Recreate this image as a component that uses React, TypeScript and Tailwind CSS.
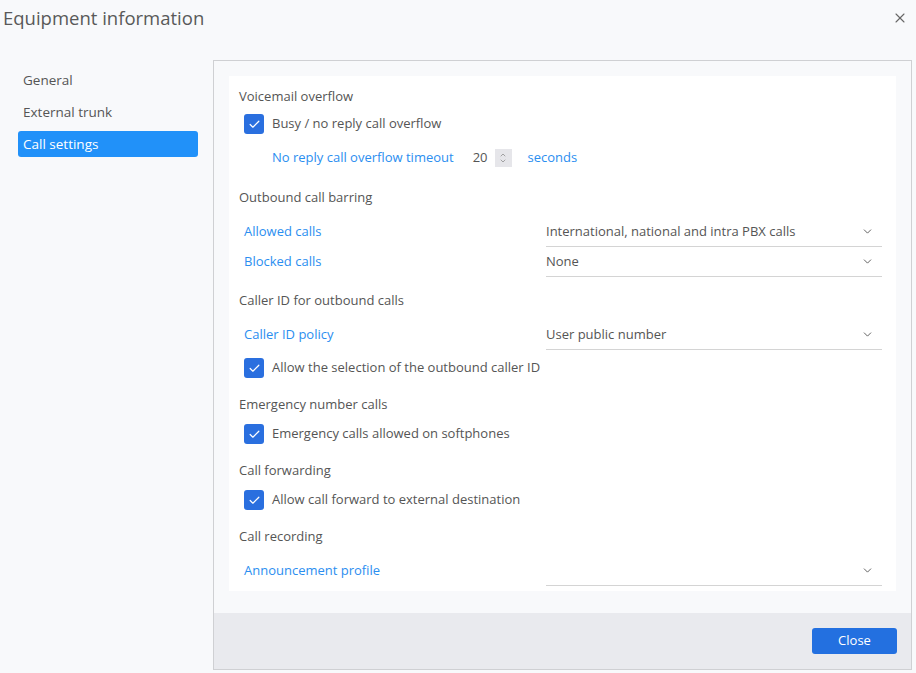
import { Check, ChevronDown, ChevronUp, X } from 'lucide-react'

function CheckRow({ label }: { label: string }) {
    return (
        <div className="flex h-[20px] items-center gap-[8px] pl-[15px]">
            <span className="flex h-[20px] w-[20px] items-center justify-center rounded-[3px] bg-[#2a6fdf]">
                <Check className="h-[13px] w-[13px] text-white" strokeWidth={2.2} />
            </span>
            <span>{label}</span>
        </div>
    )
}

function SelectRow({ label, value }: { label: string; value: string }) {
    return (
        <div className="flex h-[30px] items-center pl-[15px]">
            <span className="flex-1 text-[#2b8ef0]">{label}</span>
            <div className="flex h-[30px] w-[336px] items-center justify-between border-b border-[#d4d4d4]">
                <span>{value}</span>
                <ChevronDown className="mr-[8px] h-[13px] w-[13px] text-[#555]" strokeWidth={1.7} />
            </div>
        </div>
    )
}

function Title({ children }: { children: string }) {
    return <div className="h-[20px] pl-[10px] leading-[20px]">{children}</div>
}

export default function App() {
    const menu = ['General', 'External trunk', 'Call settings']

    return (
        <div
            className="flex h-[673px] w-[916px] flex-col bg-[#f8f9fb] text-[13px] text-[#555]"
            style={{ fontFamily: '"Open Sans", "Noto Sans", sans-serif' }}
        >
            <div className="flex h-[36px] items-center justify-between pl-[3px] pr-[8px]">
                <h1 className="text-[18.5px] text-[#595959]">Equipment information</h1>
                <X className="h-[16px] w-[16px] text-[#666]" strokeWidth={1.6} />
            </div>
            <div className="flex flex-1 pt-[24px] pb-[3px] pr-[4px]">
                <div className="flex w-[213px] flex-col pl-[18px] pr-[15px] pt-[7px]">
                    {menu.map(item => (
                        <div
                            key={item}
                            className={`mb-[6px] flex h-[26px] items-center rounded-[3px] pl-[5px] text-[13.5px] ${
                                item === 'Call settings' ? 'bg-[#2191f9] text-white' : 'text-[#555]'
                            }`}
                        >
                            {item}
                        </div>
                    ))}
                </div>
                <div className="flex flex-1 flex-col border border-[#cfd0d3]">
                    <div className="flex-1 px-[15px] pt-[15px]">
                        <div className="bg-white pr-[14px]">
                            <div className="flex flex-col pt-[10px] pb-[10px]">
                                <Title>Voicemail overflow</Title>
                                <div className="mt-[8px]">
                                    <CheckRow label="Busy / no reply call overflow" />
                                </div>
                                <div className="mt-[14px] flex h-[20px] items-center pl-[43px]">
                                    <span className="text-[#2b8ef0]">No reply call overflow timeout</span>
                                    <span className="ml-[19px]">20</span>
                                    <span className="ml-[7px] flex h-[18px] w-[17px] flex-col items-center justify-center bg-[#e6e6ea]">
                                        <ChevronUp className="-mb-[2px] h-[8px] w-[8px] text-[#888]" strokeWidth={2.2} />
                                        <ChevronDown className="h-[8px] w-[8px] text-[#888]" strokeWidth={2.2} />
                                    </span>
                                    <span className="ml-[16px] text-[#2b8ef0]">seconds</span>
                                </div>
                            </div>
                            <div className="flex flex-col pt-[9px]">
                                <Title>Outbound call barring</Title>
                                <div className="mt-[10px]">
                                    <SelectRow label="Allowed calls" value="International, national and intra PBX calls" />
                                    <SelectRow label="Blocked calls" value="None" />
                                </div>
                            </div>
                            <div className="flex flex-col pt-[13px]">
                                <Title>Caller ID for outbound calls</Title>
                                <div className="mt-[10px]">
                                    <SelectRow label="Caller ID policy" value="User public number" />
                                </div>
                                <div className="mt-[8px]">
                                    <CheckRow label="Allow the selection of the outbound caller ID" />
                                </div>
                            </div>
                            <div className="flex flex-col pt-[16px]">
                                <Title>Emergency number calls</Title>
                                <div className="mt-[10px]">
                                    <CheckRow label="Emergency calls allowed on softphones" />
                                </div>
                            </div>
                            <div className="flex flex-col pt-[16px]">
                                <Title>Call forwarding</Title>
                                <div className="mt-[10px]">
                                    <CheckRow label="Allow call forward to external destination" />
                                </div>
                            </div>
                            <div className="flex flex-col pt-[16px] pb-[5px]">
                                <Title>Call recording</Title>
                                <div className="mt-[10px]">
                                    <SelectRow label="Announcement profile" value="" />
                                </div>
                            </div>
                        </div>
                    </div>
                    <div className="flex h-[56px] items-center justify-end bg-[#e9eaee] pr-[14px]">
                        <button className="h-[26px] w-[85px] rounded-[3px] bg-[#2370e0] text-[13px] text-white">
                            Close
                        </button>
                    </div>
                </div>
            </div>
        </div>
    )
}
